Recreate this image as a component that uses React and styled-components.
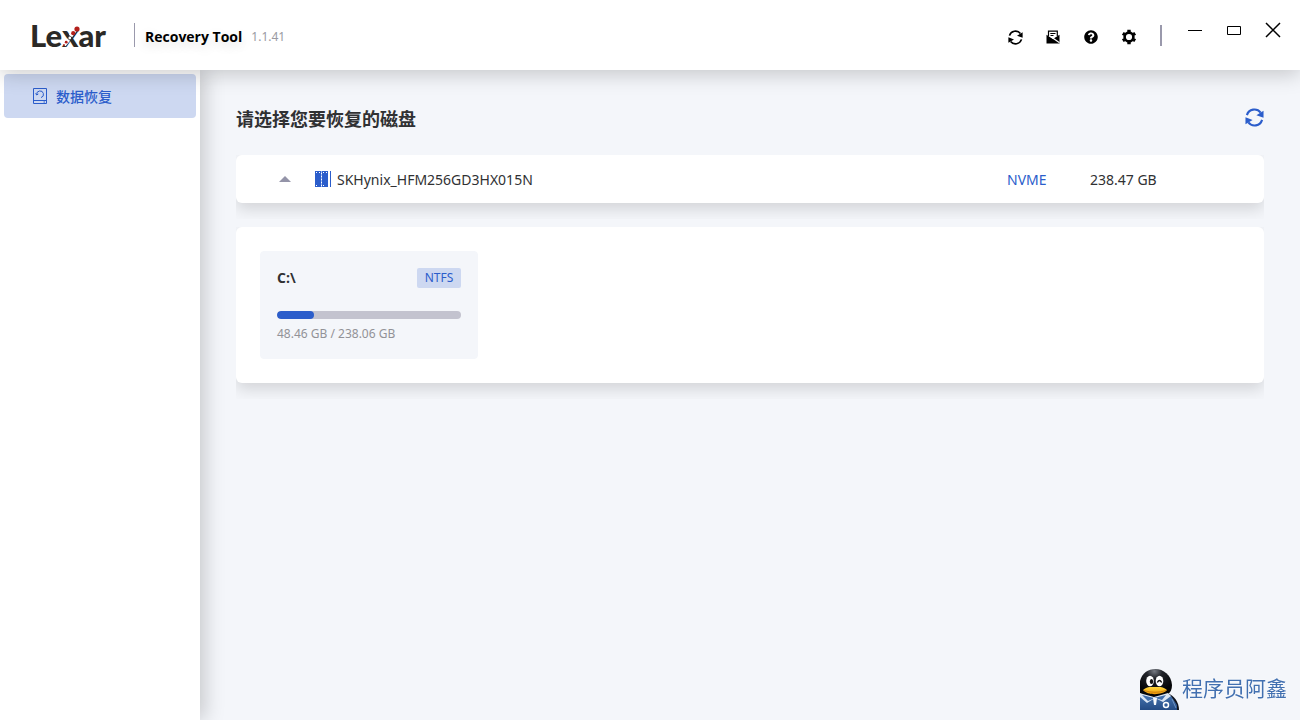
import React, { useState } from "react";
import styled, { createGlobalStyle } from "styled-components";
import { FaQuestionCircle } from "react-icons/fa";

const GlobalStyle = createGlobalStyle`
    * {
        box-sizing: border-box;
    }
    body {
        margin: 0;
        background-color: #f4f6fa;
        color: #303133;
        font-family: "Noto Sans", "Noto Sans CJK SC", sans-serif;
        font-size: 14px;
    }
    button {
        display: flex;
        align-items: center;
        justify-content: center;
        padding: 0;
        border: none;
        background: none;
        color: inherit;
        font: inherit;
        cursor: pointer;
    }
`
const Page = styled.div`
    display: flex;
    flex-direction: column;
    min-height: 100vh;
`
const Header = styled.header`
    position: relative;
    z-index: 2;
    display: flex;
    align-items: center;
    height: 70px;
    padding: 0 19px 0 30px;
    background-color: #fff;
    box-shadow: 0 4px 20px rgba(0, 0, 0, 0.2);
`
const Logo = styled.div`
    position: relative;
    width: 104px;
    color: #2b2926;
    font-family: Lato, sans-serif;
    font-size: 31px;
    font-weight: 900;
    line-height: 40px;
`
const LogoDots = styled.svg`
    position: absolute;
    left: 31px;
    top: 8px;
`
const Divider = styled.span`
    width: ${(props) => props.$width}px;
    height: ${(props) => props.$height}px;
    background-color: #9a99ac;
`
const AppName = styled.h1`
    margin: 4px 9px 0 10px;
    color: #000;
    font-family: "Open Sans", sans-serif;
    font-size: 14px;
    font-weight: 700;
    line-height: 20px;
    text-shadow: 0 4px 12px rgba(0, 0, 0, 0.15);
`
const Version = styled.span`
    flex: 1;
    margin-top: 4px;
    color: #9a9aa2;
    font-size: 12px;
    line-height: 20px;
`
const Tools = styled.nav`
    display: flex;
    gap: 22px;
    margin: 4px 23px 0 0;
    color: #000;
`
const ToolButton = styled.button`
    width: 16px;
    height: 16px;
`
const WindowButtons = styled.div`
    display: flex;
    gap: 23px;
    margin: 0 0 10px 25px;
    color: #000;
`
const Body = styled.div`
    display: flex;
    flex: 1;
`
const Sidebar = styled.aside`
    position: relative;
    z-index: 1;
    flex: none;
    width: 200px;
    padding: 4px;
    background-color: #fff;
    box-shadow: 4px 0 20px rgba(0, 0, 0, 0.2);
`
const MenuLink = styled.a`
    display: flex;
    align-items: center;
    gap: 8px;
    height: 44px;
    padding: 0 28px;
    border-radius: 4px;
    background-color: #cdd8f1;
    color: #2b5dcb;
    font-weight: 500;
    text-decoration: none;
`
const Content = styled.main`
    flex: 1;
    padding: 36px;
`
const TitleBar = styled.div`
    display: flex;
    justify-content: space-between;
    margin-bottom: 23px;
`
const Title = styled.h2`
    margin: 0;
    font-size: 18px;
    font-weight: 700;
    line-height: 26px;
`
const RefreshButton = styled.button`
    height: 22px;
    color: #2b5dcb;
`
const Card = styled.section`
    border-radius: 6px;
    background-color: #fff;
    box-shadow: 0 6px 16px rgba(0, 0, 0, 0.14);
    clip-path: inset(0 0 -16px 0);
`
const DiskRow = styled(Card)`
    display: grid;
    grid-template-columns: 1fr 83px 174px;
    align-items: center;
    height: 48px;
    margin-bottom: 24px;
    padding-left: 42px;
`
const DiskName = styled.div`
    display: flex;
    align-items: center;
    gap: 6px;
`
const Toggle = styled.button`
    width: 14px;
    height: 20px;
    margin-right: 17px;
    color: #9494a8;
`
const Bus = styled.span`
    color: #2b5dcb;
`
const Partitions = styled(Card)`
    display: flex;
    flex-wrap: wrap;
    gap: 24px;
    padding: 24px;
`
const Partition = styled.article`
    width: 218px;
    padding: 16px;
    border: 1px solid #f4f6fa;
    border-radius: 4px;
    background-color: #f4f6fa;
`
const PartitionHead = styled.div`
    display: flex;
    align-items: center;
    justify-content: space-between;
    margin-bottom: 23px;
    line-height: 20px;
`
const Letter = styled.strong`
    font-family: "Open Sans", sans-serif;
    font-weight: 700;
`
const Badge = styled.span`
    width: 44px;
    border-radius: 2px;
    background-color: #cdd8f1;
    color: #2b5dcb;
    font-size: 12px;
    text-align: center;
`
const Bar = styled.div`
    height: 8px;
    border-radius: 4px;
    background-color: #c3c3cf;
    overflow: hidden;
`
const BarFill = styled.div`
    height: 100%;
    border-radius: 4px;
    background-color: #2b5dcb;
`
const Usage = styled.div`
    margin-top: 6px;
    color: #929297;
    font-size: 12px;
    line-height: 17px;
`
const Watermark = styled.div`
    position: fixed;
    right: 13px;
    bottom: 10px;
    z-index: 3;
    display: flex;
    align-items: center;
    gap: 2px;
    color: #4270b0;
    font-family: "Noto Sans CJK SC", sans-serif;
    font-size: 21px;
    line-height: 36px;
    text-shadow: 0 0 2px #fff;
`
const Signature = styled.span`
    padding-bottom: 5px;
`

const disk = {
    name: "SKHynix_HFM256GD3HX015N",
    bus: "NVME",
    size: "238.47 GB",
    partitions: [{ letter: "C:\\", type: "NTFS", used: 48.46, total: 238.06 }],
}

const RefreshIcon = ({ size }) => (
    <svg width={size} height={size} viewBox="0 0 20 20" fill="none" stroke="currentColor" strokeWidth="2.2">
        <path d="M2 7.5A8.3 8.3 0 0 1 16.5 4.8M18 12.5A8.3 8.3 0 0 1 3.5 15.2" />
        <path d="M19.5 3V10.3L12 7.500ZM.5 17V9.700L8 12.5Z" fill="currentColor" stroke="none" />
    </svg>
)

const MailIcon = () => (
    <svg width="14" height="14" viewBox="0 0 14 14">
        <path d="M2.5 6V1.2H11.3V6" fill="#fff" stroke="#000" strokeWidth="1.2" />
        <path d="M4.3 3.5H9.5M4.3 5.5H7.5" stroke="#000" strokeWidth="1" />
        <path d="M.5 4.7 6.9 8.9 13.5 4.7V13.5H.5Z" fill="#000" />
        <path d="M3.5 5.8 13.5 12.8" stroke="#fff" strokeWidth="1.2" />
    </svg>
)

const GearIcon = () => (
    <svg width="16" height="16" viewBox="-8 -8 16 16" fill="none" stroke="currentColor">
        <circle r="4.4" strokeWidth="2.6" />
        <path d="M0-7.2V-5M0 7.2V5M6.2-3.6 4.5-2.6M6.2 3.6 4.5 2.6M-6.2-3.6-4.5-2.6M-6.2 3.6-4.500 2.6" strokeWidth="3.4" />
    </svg>
)

const RecoveryIcon = () => (
    <svg width="16" height="16" viewBox="0 0 16 16" fill="none" stroke="currentColor">
        <path d="M1.5.5H14.5V15.5H1.5ZM1.5 12.5H14.5M11.5 14H13" />
        <path d="M4.7 6.8A3.4 3.4 0 1 1 9 9.6M3.6 5.4 4.7 7 6.3 6" />
    </svg>
)

const DiskIcon = () => (
    <svg width="16" height="16" viewBox="0 0 16 16">
        <path d="M0 0H6V16H0ZM7 0H13V16H7ZM15 0H16V16H15Z" fill="#2b5dcb" />
        <path d="M1 1.5H2M4 1.5H5M8 1.5H9M11 1.5H12M1 14.5H2M8 14.5H9" stroke="#fff" />
        <path d="M6.5 0V16" stroke="#9eb6ea" strokeDasharray="2 1" />
    </svg>
)

const Penguin = () => (
    <svg width="40" height="41" viewBox="0 0 40 41">
        <defs>
            <radialGradient id="head" cx=".45" cy=".08" r=".7">
                <stop offset="0" stopColor="#777b83" />
                <stop offset=".35" stopColor="#23252b" />
                <stop offset="1" stopColor="#050608" />
            </radialGradient>
            <linearGradient id="beak" x2="0" y2="1">
                <stop offset="0" stopColor="#ffd83d" />
                <stop offset="1" stopColor="#f09a08" />
            </linearGradient>
            <linearGradient id="shirt" x2="0" y2="1">
                <stop offset="0" stopColor="#4d7db9" />
                <stop offset="1" stopColor="#244b84" />
            </linearGradient>
        </defs>
        <path d="M27 24C34 26 39 33 39 41H20Z" fill="#10131b" />
        <path d="M0 25C10 21 25 21 31 27L37 36V41H0Z" fill="url(#shirt)" />
        <path d="M0 12C2 4 8 0 15.5 0S31.5 6 32 16C32 25 26 28 15 28C7 28 2 27 0 24Z" fill="url(#head)" />
        <path d="M0 24 3 25 14 28 28 24 31 27 23 33 15 29 7 34 0 28Z" fill="#dbe6f4" />
        <path d="M2 26 14 29 26 26 22 31 15 29 8 32Z" fill="#3f6dab" />
        <path d="M13 29H17L16 36H14Z" fill="#f6f9fd" />
        <ellipse cx="10" cy="12" rx="3.8" ry="5.3" fill="#fff" />
        <ellipse cx="19.5" cy="12" rx="3.8" ry="5.3" fill="#fff" />
        <ellipse cx="11.5" cy="12.5" rx="1.7" ry="2.5" fill="#111" />
        <path d="M17.3 13.5Q19.5 9.5 21.7 13.5" fill="none" stroke="#111" strokeWidth="1.4" />
        <path d="M3 21C7 17 12 18 15 18S23 17 27 21C23 26 8 27 3 21Z" fill="url(#beak)" />
        <path d="M4 21.5Q15 25 26 21.5" fill="none" stroke="#bd6c07" strokeWidth=".7" />
        <circle cx="26" cy="36" r="2.5" fill="#315d9a" stroke="#fff" strokeWidth="1.5" />
        <path d="M32 30 36 39" stroke="#7094c2" />
    </svg>
)

const App = () => {
    const [open, setOpen] = useState(true)

    return (
        <Page>
            <GlobalStyle />
            <Header>
                <Logo>
                    Lexar
                    <LogoDots width="20" height="24" viewBox="0 0 20 24">
                        <path d="M9.5 13 16 4M7.500 16.5 3 22" stroke="#fff" strokeWidth="4" />
                        <g fill="#b3201b">
                            <circle cx="16" cy="6" r="2.6" />
                            <circle cx="12.2" cy="10.2" r="2.1" />
                            <circle cx="5.2" cy="19.2" r="1.4" />
                            <circle cx="3" cy="22" r=".9" />
                        </g>
                        <circle cx="8.8" cy="15" r="1.4" fill="#fff" />
                    </LogoDots>
                </Logo>
                <Divider $width={1} $height={24} />
                <AppName>Recovery Tool</AppName>
                <Version>1.1.41</Version>
                <Tools>
                    <ToolButton aria-label="检查更新"><RefreshIcon size={15} /></ToolButton>
                    <ToolButton aria-label="反馈"><MailIcon /></ToolButton>
                    <ToolButton aria-label="帮助"><FaQuestionCircle size={14} /></ToolButton>
                    <ToolButton aria-label="设置"><GearIcon /></ToolButton>
                </Tools>
                <Divider $width={2} $height={21} />
                <WindowButtons>
                    <ToolButton aria-label="最小化">
                        <svg width="16" height="16"><path d="M1 8.5H15" stroke="currentColor" /></svg>
                    </ToolButton>
                    <ToolButton aria-label="最大化">
                        <svg width="16" height="16"><path d="M1.5 4.5H14.5V12.5H1.5Z" fill="none" stroke="currentColor" /></svg>
                    </ToolButton>
                    <ToolButton aria-label="关闭">
                        <svg width="16" height="16"><path d="M1 1 15 15M15 1 1 15" stroke="currentColor" strokeWidth="1.5" /></svg>
                    </ToolButton>
                </WindowButtons>
            </Header>
            <Body>
                <Sidebar>
                    <MenuLink href="#recovery">
                        <RecoveryIcon />
                        数据恢复
                    </MenuLink>
                </Sidebar>
                <Content>
                    <TitleBar>
                        <Title>请选择您要恢复的磁盘</Title>
                        <RefreshButton aria-label="刷新"><RefreshIcon size={19} /></RefreshButton>
                    </TitleBar>
                    <DiskRow>
                        <DiskName>
                            <Toggle aria-label="展开" aria-expanded={open} onClick={() => setOpen(!open)}>
                                <svg width="14" height="8"><path d="M1 7 7 1 13 7Z" fill="currentColor" /></svg>
                            </Toggle>
                            <DiskIcon />
                            {disk.name}
                        </DiskName>
                        <Bus>{disk.bus}</Bus>
                        <span>{disk.size}</span>
                    </DiskRow>
                    {open && (
                        <Partitions>
                            {disk.partitions.map((item) => {
                                return (
                                    <Partition key={item.letter}>
                                        <PartitionHead>
                                            <Letter>{item.letter}</Letter>
                                            <Badge>{item.type}</Badge>
                                        </PartitionHead>
                                        <Bar>
                                            <BarFill style={{ width: `${(item.used / item.total) * 100}%` }} />
                                        </Bar>
                                        <Usage>{item.used} GB / {item.total} GB</Usage>
                                    </Partition>
                                )
                            })}
                        </Partitions>
                    )}
                </Content>
            </Body>
            <Watermark>
                <Penguin />
                <Signature>程序员阿鑫</Signature>
            </Watermark>
        </Page>
    )
}
export default App;
